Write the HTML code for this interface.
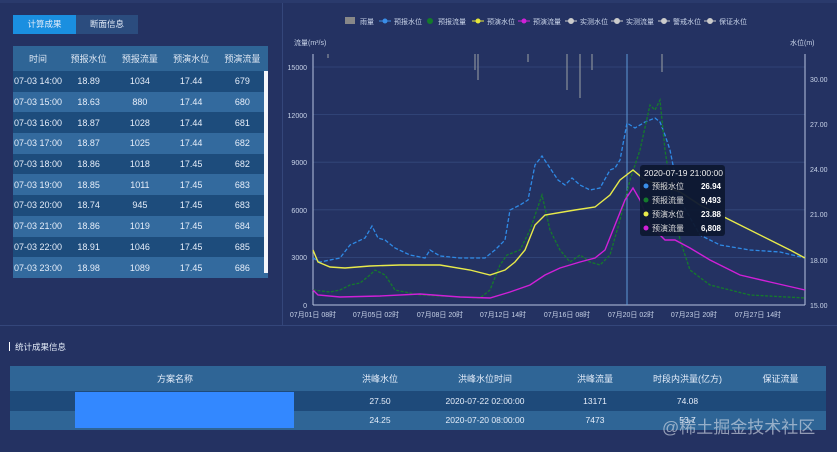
<!DOCTYPE html>
<html><head><meta charset="utf-8"><style>
*{margin:0;padding:0;box-sizing:border-box}
body{width:837px;height:452px;background:#243262;font-family:"Liberation Sans","Noto Sans CJK SC",sans-serif;color:#e6eefa;position:relative;overflow:hidden;font-size:9px}
.abs{position:absolute}
.tab{position:absolute;top:15px;height:19px;line-height:19px;text-align:center;font-size:8.5px}
table{border-collapse:collapse;position:absolute}
td,th{text-align:center;font-weight:normal;white-space:nowrap}
#lt td,#lt th{font-size:9px}
#lt th{height:25px;background:#2f6596;color:#dfe8f4}
#lt td{height:20.7px}
#lt tr.d td{background:#1d4c7c}
#lt tr.l td{background:#336a9e}
#bt th{height:25px;background:#2f6596;font-size:9px}
#bt td{height:19.5px;font-size:8.5px}
#bt tr.d td{background:#1e4a7a}
#bt tr.l td{background:#2f6596}
</style></head><body>
<div class="abs" style="left:0;top:0;width:837px;height:3px;background:#2a3a6c"></div>
<div class="abs" style="left:282px;top:3px;width:1px;height:322px;background:#34467a"></div>
<div class="abs" style="left:0;top:325px;width:837px;height:1px;background:#34467a"></div>
<div class="tab" style="left:13px;width:63px;background:#1a8fe0">计算成果</div>
<div class="tab" style="left:76px;width:62px;background:#2b4c7e">断面信息</div>
<table id="lt" style="left:13px;top:46px;width:255px">
<tr><th style="width:50px">时间</th><th>预报水位</th><th>预报流量</th><th>预演水位</th><th>预演流量</th></tr>
<tr class="d"><td>07-03 14:00</td><td>18.89</td><td>1034</td><td>17.44</td><td>679</td></tr>
<tr class="l"><td>07-03 15:00</td><td>18.63</td><td>880</td><td>17.44</td><td>680</td></tr>
<tr class="d"><td>07-03 16:00</td><td>18.87</td><td>1028</td><td>17.44</td><td>681</td></tr>
<tr class="l"><td>07-03 17:00</td><td>18.87</td><td>1025</td><td>17.44</td><td>682</td></tr>
<tr class="d"><td>07-03 18:00</td><td>18.86</td><td>1018</td><td>17.45</td><td>682</td></tr>
<tr class="l"><td>07-03 19:00</td><td>18.85</td><td>1011</td><td>17.45</td><td>683</td></tr>
<tr class="d"><td>07-03 20:00</td><td>18.74</td><td>945</td><td>17.45</td><td>683</td></tr>
<tr class="l"><td>07-03 21:00</td><td>18.86</td><td>1019</td><td>17.45</td><td>684</td></tr>
<tr class="d"><td>07-03 22:00</td><td>18.91</td><td>1046</td><td>17.45</td><td>685</td></tr>
<tr class="l"><td>07-03 23:00</td><td>18.98</td><td>1089</td><td>17.45</td><td>686</td></tr>
</table>
<div class="abs" style="left:264px;top:71px;width:4px;height:202px;background:#f4f6fa"></div>

<svg class="abs" style="left:0;top:0" width="837" height="325" font-family="Liberation Sans,Noto Sans CJK SC,sans-serif" font-size="7.5" fill="#c8d3e8">
<g font-size="7">
<rect x="345" y="17" width="10" height="7" fill="#888"/><text x="360" y="24">雨量</text>
<line x1="379" y1="21" x2="391" y2="21" stroke="#3a8ee8"/><circle cx="385" cy="21" r="2.5" fill="#3a8ee8"/><text x="394" y="24">预报水位</text>
<circle cx="430" cy="21" r="3" fill="#137b2a"/><text x="438" y="24">预报流量</text>
<line x1="472" y1="21" x2="484" y2="21" stroke="#e6e63a"/><circle cx="478" cy="21" r="2.5" fill="#e6e63a"/><text x="487" y="24">预演水位</text>
<line x1="518" y1="21" x2="530" y2="21" stroke="#d020d8"/><circle cx="524" cy="21" r="2.5" fill="#d020d8"/><text x="533" y="24">预演流量</text>
<g stroke="#ccc" fill="#ccc"><line x1="565" y1="21" x2="577" y2="21"/><circle cx="571" cy="21" r="2.5"/><line x1="611" y1="21" x2="623" y2="21"/><circle cx="617" cy="21" r="2.5"/><line x1="658" y1="21" x2="670" y2="21"/><circle cx="664" cy="21" r="2.5"/><line x1="704" y1="21" x2="716" y2="21"/><circle cx="710" cy="21" r="2.5"/></g>
<text x="580" y="24">实测水位</text><text x="626" y="24">实测流量</text><text x="673" y="24">警戒水位</text><text x="719" y="24">保证水位</text>
</g>
<text x="294" y="45" font-size="7">流量(m³/s)</text><text x="790" y="45" font-size="7">水位(m)</text>
<g stroke="#34497c" stroke-width="0.8"><line x1="313" y1="67" x2="805" y2="67"/><line x1="313" y1="114.6" x2="805" y2="114.6"/><line x1="313" y1="162.2" x2="805" y2="162.2"/><line x1="313" y1="209.8" x2="805" y2="209.8"/><line x1="313" y1="257.4" x2="805" y2="257.4"/></g>
<line x1="313" y1="54" x2="313" y2="305" stroke="#b8c4e0"/><line x1="805" y1="54" x2="805" y2="305" stroke="#b8c4e0"/>
<line x1="313" y1="305" x2="805" y2="305" stroke="#b8c4e0"/>
<g text-anchor="end" font-size="7"><text x="307" y="70">15000</text><text x="307" y="118">12000</text><text x="307" y="165">9000</text><text x="307" y="213">6000</text><text x="307" y="260">3000</text><text x="307" y="308">0</text></g>
<g font-size="7"><text x="810" y="82">30.00</text><text x="810" y="127">27.00</text><text x="810" y="172">24.00</text><text x="810" y="217">21.00</text><text x="810" y="263">18.00</text><text x="810" y="308">15.00</text></g>
<g font-size="7" text-anchor="middle"><text x="313" y="317">07月01日 08时</text><text x="376" y="317">07月05日 02时</text><text x="440" y="317">07月08日 20时</text><text x="503" y="317">07月12日 14时</text><text x="567" y="317">07月16日 08时</text><text x="631" y="317">07月20日 02时</text><text x="694" y="317">07月23日 20时</text><text x="758" y="317">07月27日 14时</text></g>
<g stroke="#8a8f9a" stroke-width="1.2"><line x1="328" y1="54" x2="328" y2="58"/><line x1="475" y1="54" x2="475" y2="70"/><line x1="478" y1="54" x2="478" y2="80"/><line x1="528" y1="54" x2="528" y2="62"/><line x1="567" y1="54" x2="567" y2="90"/><line x1="580" y1="54" x2="580" y2="98"/><line x1="592" y1="54" x2="592" y2="70"/><line x1="662" y1="54" x2="662" y2="72"/></g>
<line x1="627" y1="54" x2="627" y2="305" stroke="#5e9bd8"/>
<polyline fill="none" stroke="#2f8ae6" stroke-width="1.3" stroke-dasharray="4,2" points="313,258 320,262 340,258 350,245 365,238 372,226 378,238 385,240 395,248 410,255 425,258 430,250 440,256 460,258 485,258 495,250 505,240 510,210 520,205 528,200 535,165 542,156 550,168 558,180 565,185 572,178 580,185 590,190 600,188 610,170 615,168 620,160 627,123 635,128 645,122 655,118 660,122 665,135 670,150 680,200 700,235 720,245 750,250 780,252 805,258"/>
<polyline fill="none" stroke="#157a2c" stroke-width="1.3" stroke-dasharray="3,1.5" points="313,290 330,292 340,290 350,285 360,283 370,275 375,270 385,275 395,290 420,295 480,298 490,290 500,265 507,255 520,250 530,230 542,195 550,230 560,250 570,262 580,255 590,262 600,265 610,255 620,220 630,180 640,150 650,105 655,110 660,100 665,150 672,195 680,240 690,270 710,285 750,295 805,298"/>
<polyline fill="none" stroke="#e8ea4a" stroke-width="1.4" points="313,250 318,262 330,267 345,268 370,266 400,265 440,265 470,270 490,275 505,270 515,262 525,250 535,225 545,215 575,210 595,207 610,195 620,180 633,170 645,180 660,185 680,192 700,205 740,225 770,240 790,250 805,258"/>
<polyline fill="none" stroke="#d020d8" stroke-width="1.4" points="313,290 318,295 340,297 380,296 420,294 460,297 490,298 510,292 530,285 545,275 560,268 580,262 595,258 605,250 615,225 625,200 633,188 640,200 650,225 665,240 675,240 690,248 710,260 740,275 770,282 805,290"/>
<rect x="640" y="165" width="85" height="71" rx="3" fill="#0e1830" opacity="0.95"/>
<text x="644" y="176" font-size="8.5" fill="#eee">2020-07-19 21:00:00</text>
<g font-size="8"><circle cx="646" cy="186" r="2.5" fill="#3a8ee8"/><text x="652" y="189" fill="#ddd">预报水位</text><text x="721" y="189" text-anchor="end" font-weight="bold" fill="#fff">26.94</text>
<circle cx="646" cy="200" r="2.5" fill="#157a2c"/><text x="652" y="203" fill="#ddd">预报流量</text><text x="721" y="203" text-anchor="end" font-weight="bold" fill="#fff">9,493</text>
<circle cx="646" cy="214" r="2.5" fill="#e8ea4a"/><text x="652" y="217" fill="#ddd">预演水位</text><text x="721" y="217" text-anchor="end" font-weight="bold" fill="#fff">23.88</text>
<circle cx="646" cy="228" r="2.5" fill="#d020d8"/><text x="652" y="231" fill="#ddd">预演流量</text><text x="721" y="231" text-anchor="end" font-weight="bold" fill="#fff">6,808</text></g>
</svg>

<div class="abs" style="left:9px;top:342px;width:1px;height:9px;background:#fff"></div>
<div class="abs" style="left:15px;top:341px;font-size:8.5px">统计成果信息</div>
<table id="bt" style="left:10px;top:366px;width:816px">
<tr><th style="width:330px">方案名称</th><th style="width:80px">洪峰水位</th><th style="width:130px">洪峰水位时间</th><th style="width:90px">洪峰流量</th><th style="width:95px">时段内洪量(亿方)</th><th>保证流量</th></tr>
<tr class="d"><td></td><td>27.50</td><td>2020-07-22 02:00:00</td><td>13171</td><td>74.08</td><td></td></tr>
<tr class="l"><td></td><td>24.25</td><td>2020-07-20 08:00:00</td><td>7473</td><td>53.7</td><td></td></tr>
</table>
<div class="abs" style="left:75px;top:392px;width:219px;height:36px;background:#3388ff"></div>
<div class="abs" style="left:662px;top:413px;font-size:17px;color:rgba(220,225,235,0.6)">@稀土掘金技术社区</div>
</body></html>
